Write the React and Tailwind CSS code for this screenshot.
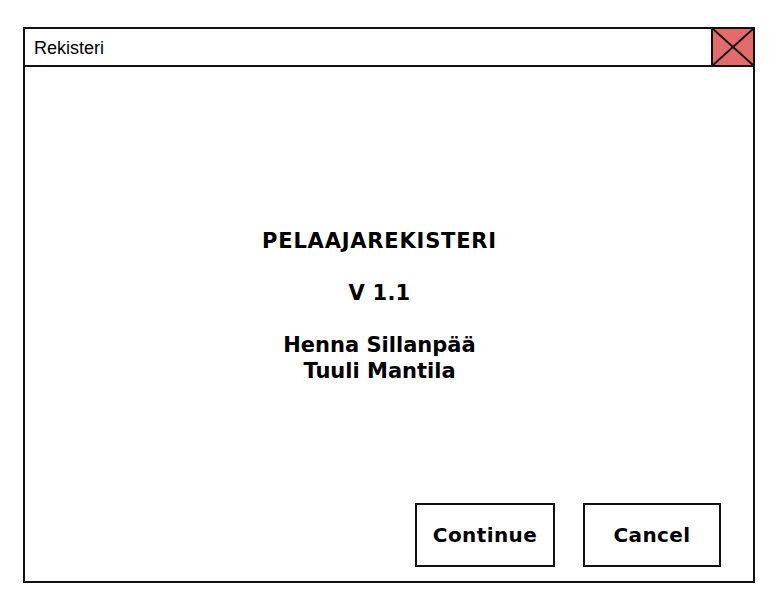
export default function App() {
  const bold = { fontFamily: '"DejaVu Sans", Verdana, sans-serif' }
  return (
    <div className="w-[776px] h-[606px] bg-white pl-[23px] pt-[27px]">
      <div className="w-[732px] h-[556px] border-2 border-[#111] flex flex-col">
        <div className="h-[38px] border-b-2 border-[#111] flex items-stretch">
          <div className="flex-1 flex items-center pl-[9px] pt-[2px] text-[18px] text-black" style={{ fontFamily: '"Liberation Sans", Arial, sans-serif' }}>
            Rekisteri
          </div>
          <div className="w-[42px] border-l-2 border-[#111] bg-[#e36b6b]">
            <svg width="40" height="36" viewBox="0 0 40 36" className="block">
              <line x1="0" y1="0" x2="40" y2="36" stroke="#111" strokeWidth="2" />
              <line x1="40" y1="0" x2="0" y2="36" stroke="#111" strokeWidth="2" />
            </svg>
          </div>
        </div>
        <div className="flex-1 flex flex-col">
          <div className="pt-[161px] pr-[19px] flex flex-col items-center text-[21px] leading-[26px] font-bold text-black" style={bold}>
            <div className="tracking-[0.8px]">PELAAJAREKISTERI</div>
            <div className="h-[26px]" />
            <div className="tracking-[0.2px]">V 1.1</div>
            <div className="h-[26px]" />
            <div>Henna Sillanpää</div>
            <div>Tuuli Mantila</div>
          </div>
          <div className="mt-auto flex justify-end gap-[28px] pr-[32px] pb-[14px]">
            <button className="w-[140px] h-[64px] border-2 border-[#111] bg-white text-[20px] tracking-[0.4px] font-bold text-black" style={bold}>
              Continue
            </button>
            <button className="w-[138px] h-[64px] border-2 border-[#111] bg-white text-[20px] tracking-[0.4px] font-bold text-black" style={bold}>
              Cancel
            </button>
          </div>
        </div>
      </div>
    </div>
  )
}
